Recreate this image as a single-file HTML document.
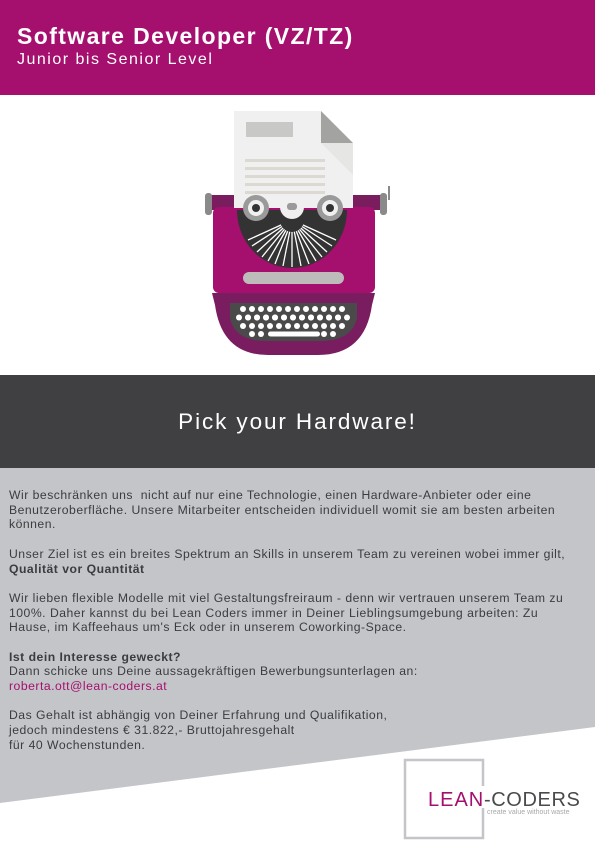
<!DOCTYPE html>
<html><head><meta charset="utf-8"><style>
*{margin:0;padding:0;box-sizing:border-box}
body{width:595px;height:842px;position:relative;overflow:hidden;background:#fff;font-family:"Liberation Sans",sans-serif}
.hdr{position:absolute;left:0;top:0;width:595px;height:95px;background:#a50f6e;color:#fff}
.t1{position:absolute;left:17px;top:23px;font-size:23px;font-weight:bold;white-space:nowrap;letter-spacing:1.4px}
.t2{position:absolute;left:17px;top:51px;font-size:16px;white-space:nowrap;letter-spacing:1.5px}
.band{position:absolute;left:0;top:375px;width:595px;height:93px;background:#404042;color:#fff;font-size:22.5px;text-align:center;line-height:93px;letter-spacing:1.9px}
.txt{position:absolute;left:9px;top:488px;width:590px;font-size:12.2px;line-height:14.7px;color:#3c3c3e;white-space:nowrap;letter-spacing:0.5px}
.txt p{margin-bottom:14.7px}
b{font-weight:bold}
.mail{color:#a50f6e}
</style></head><body>
<div class="hdr"><div class="t1">Software Developer (VZ/TZ)</div><div class="t2">Junior bis Senior Level</div></div>
<svg style="position:absolute;left:0;top:0" width="595" height="842">
<polygon points="0,468 595,468 595,727 0,803" fill="#c4c5c9"/>
<rect x="208" y="195" width="178" height="15" fill="#7a1d5f"/>
<rect x="205" y="193" width="7" height="22" rx="3" fill="#8a8a8a"/>
<rect x="380" y="193" width="7" height="22" rx="3" fill="#8a8a8a"/>
<line x1="389" y1="186" x2="389" y2="200" stroke="#8a8a8a" stroke-width="2"/>
<rect x="213" y="207" width="162" height="86" rx="6" fill="#a50f6e"/>
<path d="M234,111 H321 L353,143 V208 H234 Z" fill="#f0f0f0"/>
<path d="M321,111 L321,143 L353,143 Z" fill="#a3a3a1"/>
<path d="M321,143 L353,143 L353,175 Z" fill="#e6e6e4"/>
<rect x="246" y="122" width="47" height="15" fill="#c8c8c6"/>
<g fill="#dcd9d3"><rect x="245" y="159" width="80" height="3"/><rect x="245" y="167" width="80" height="3"/><rect x="245" y="175" width="80" height="3"/><rect x="245" y="183" width="80" height="3"/><rect x="245" y="191" width="80" height="3"/></g>
<path d="M237,210 A55,58 0 0 0 347,210 Z" fill="#333"/>
<g stroke="#fff" stroke-width="1.3">
<line x1="292" y1="220" x2="248" y2="240"/><line x1="292" y1="220" x2="252" y2="246"/><line x1="292" y1="220" x2="257" y2="252"/><line x1="292" y1="220" x2="262" y2="257"/><line x1="292" y1="220" x2="268" y2="261"/><line x1="292" y1="220" x2="275" y2="264"/><line x1="292" y1="220" x2="283" y2="266"/><line x1="292" y1="220" x2="292" y2="267"/><line x1="292" y1="220" x2="301" y2="266"/><line x1="292" y1="220" x2="309" y2="264"/><line x1="292" y1="220" x2="316" y2="261"/><line x1="292" y1="220" x2="322" y2="257"/><line x1="292" y1="220" x2="327" y2="252"/><line x1="292" y1="220" x2="332" y2="246"/><line x1="292" y1="220" x2="336" y2="240"/>
</g>
<circle cx="292" cy="220" r="12" fill="#333"/>
<path d="M280,207 A12,12 0 0 0 304,207 Z" fill="#f0f0f0"/>
<rect x="287" y="203" width="10" height="7" rx="3" fill="#9a9a9a"/>
<circle cx="256" cy="208" r="13" fill="#9a9a9a"/><circle cx="256" cy="208" r="8" fill="#f0f0f0"/><circle cx="256" cy="208" r="4" fill="#333"/>
<circle cx="330" cy="208" r="13" fill="#9a9a9a"/><circle cx="330" cy="208" r="8" fill="#f0f0f0"/><circle cx="330" cy="208" r="4" fill="#333"/>
<rect x="243" y="272" width="101" height="12" rx="6" fill="#bdbcba"/>
<path d="M212,293 H375 L372,305 Q365,355 318,355 H268 Q222,355 215,305 Z" fill="#7a1d60"/>
<path d="M230,303 H357 V318 Q352,341 320,341 H266 Q235,341 230,318 Z" fill="#4a4a4a"/>
<g fill="#fff">
<g id="r1"><circle cx="243" cy="309" r="3"/><circle cx="252" cy="309" r="3"/><circle cx="261" cy="309" r="3"/><circle cx="270" cy="309" r="3"/><circle cx="279" cy="309" r="3"/><circle cx="288" cy="309" r="3"/><circle cx="297" cy="309" r="3"/><circle cx="306" cy="309" r="3"/><circle cx="315" cy="309" r="3"/><circle cx="324" cy="309" r="3"/><circle cx="333" cy="309" r="3"/><circle cx="342" cy="309" r="3"/></g>
<use href="#r1" x="-4" y="8.5"/><use href="#r1" x="5" y="8.5"/>
<use href="#r1" y="17"/>
<circle cx="252" cy="334" r="3"/><circle cx="261" cy="334" r="3"/><circle cx="324" cy="334" r="3"/><circle cx="333" cy="334" r="3"/>
<rect x="268" y="331.5" width="52" height="5" rx="2.5"/>
</g>
<rect x="405" y="760" width="78" height="78" fill="none" stroke="#c4c5c9" stroke-width="2.5"/>
<rect x="426" y="786" width="160" height="22" fill="#fff"/>
<text x="428" y="806" font-family="Liberation Sans,sans-serif" font-size="20" fill="#a50f6e" letter-spacing="1">LEAN</text>
<text x="484" y="806" font-family="Liberation Sans,sans-serif" font-size="20" fill="#4a4a4c" letter-spacing="0.6">-CODERS</text>
<text x="487" y="814" font-family="Liberation Sans,sans-serif" font-size="7" fill="#a8a8aa">create value without waste</text>
</svg>
<div class="band">Pick your Hardware!</div>
<div class="txt">
<p>Wir beschränken uns&nbsp; nicht auf nur eine Technologie, einen Hardware-Anbieter oder eine<br>Benutzeroberfläche. Unsere Mitarbeiter entscheiden individuell womit sie am besten arbeiten<br>können.</p>
<p>Unser Ziel ist es ein breites Spektrum an Skills in unserem Team zu vereinen wobei immer gilt,<br><b>Qualität vor Quantität</b></p>
<p>Wir lieben flexible Modelle mit viel Gestaltungsfreiraum - denn wir vertrauen unserem Team zu<br>100%. Daher kannst du bei Lean Coders immer in Deiner Lieblingsumgebung arbeiten: Zu<br>Hause, im Kaffeehaus um's Eck oder in unserem Coworking-Space.</p>
<p><b>Ist dein Interesse geweckt?</b><br>Dann schicke uns Deine aussagekräftigen Bewerbungsunterlagen an:<br><span class="mail">roberta.ott@lean-coders.at</span></p>
<p>Das Gehalt ist abhängig von Deiner Erfahrung und Qualifikation,<br>jedoch mindestens € 31.822,- Bruttojahresgehalt<br>für 40 Wochenstunden.</p>
</div>
</body></html>
